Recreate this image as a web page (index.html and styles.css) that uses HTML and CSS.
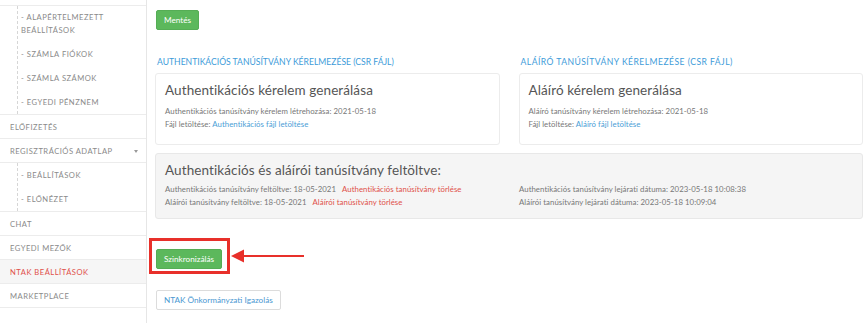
FILE: index.html
```html
<!DOCTYPE html>
<html lang="hu">
<head>
<meta charset="utf-8">
<title>NTAK beállítások</title>
<link rel="stylesheet" href="styles.css">
</head>
<body>
<div class="layout">
  <aside class="sidebar">
    <ul class="nav">
      <li class="nav-group">
        <ul class="sub">
          <li class="sub-item two-line">- ALAPÉRTELMEZETT BEÁLLÍTÁSOK</li>
          <li class="sub-item">- SZÁMLA FIÓKOK</li>
          <li class="sub-item">- SZÁMLA SZÁMOK</li>
          <li class="sub-item">- EGYEDI PÉNZNEM</li>
        </ul>
      </li>
      <li class="nav-item">ELŐFIZETÉS</li>
      <li class="nav-item has-caret">REGISZTRÁCIÓS ADATLAP <span class="caret"></span></li>
      <li class="nav-group">
        <ul class="sub">
          <li class="sub-item">- BEÁLLÍTÁSOK</li>
          <li class="sub-item">- ELŐNÉZET</li>
        </ul>
      </li>
      <li class="nav-item">CHAT</li>
      <li class="nav-item">EGYEDI MEZŐK</li>
      <li class="nav-item active">NTAK BEÁLLÍTÁSOK</li>
      <li class="nav-item">MARKETPLACE</li>
    </ul>
  </aside>
  <main class="main">
    <div class="row-save">
      <button class="btn btn-green">Mentés</button>
    </div>
    <div class="cols">
      <section class="col">
        <h3 class="sec-title">AUTHENTIKÁCIÓS TANÚSÍTVÁNY KÉRELMEZÉSE (CSR FÁJL)</h3>
        <div class="card">
          <h2 class="card-title">Authentikációs kérelem generálása</h2>
          <p class="line">Authentikációs tanúsítvány kérelem létrehozása: 2021-05-18</p>
          <p class="line">Fájl letöltése: <a class="link-blue">Authentikációs fájl letöltése</a></p>
        </div>
      </section>
      <section class="col">
        <h3 class="sec-title wide">ALÁÍRÓ TANÚSÍTVÁNY KÉRELMEZÉSE (CSR FÁJL)</h3>
        <div class="card">
          <h2 class="card-title">Aláíró kérelem generálása</h2>
          <p class="line">Aláíró tanúsítvány kérelem létrehozása: 2021-05-18</p>
          <p class="line">Fájl letöltése: <a class="link-blue">Aláíró fájl letöltése</a></p>
        </div>
      </section>
    </div>
    <div class="panel">
      <h2 class="card-title">Authentikációs és aláírói tanúsítvány feltöltve:</h2>
      <div class="panel-grid">
        <div>
          <p class="line">Authentikációs tanúsítvány feltöltve: 18-05-2021<a class="link-red">Authentikációs tanúsítvány törlése</a></p>
          <p class="line">Aláírói tanúsítvány feltöltve: 18-05-2021<a class="link-red">Aláírói tanúsítvány törlése</a></p>
        </div>
        <div>
          <p class="line">Authentikációs tanúsítvány lejárati dátuma: 2023-05-18 10:08:38</p>
          <p class="line">Aláírói tanúsítvány lejárati dátuma: 2023-05-18 10:09:04</p>
        </div>
      </div>
    </div>
    <div class="row-sync">
      <div class="highlight">
        <button class="btn btn-green">Szinkronizálás</button>
      </div>
      <svg class="arrow" width="74" height="14" viewBox="0 0 74 14">
        <path d="M12 7 H73" stroke="#e8302a" stroke-width="2.2" fill="none"/>
        <path d="M0 7 L13 0.5 L13 13.5 Z" fill="#e8302a"/>
      </svg>
    </div>
    <div class="row-ntak">
      <button class="btn btn-outline">NTAK Önkormányzati Igazolás</button>
    </div>
  </main>
</div>
</body>
</html>
```

FILE: styles.css
```css
* { box-sizing: border-box; }
html, body { margin: 0; padding: 0; background: #fff; }
body {
  font-family: Lato, "Open Sans", "Liberation Sans", sans-serif;
  color: #777;
  width: 864px;
  height: 323px;
  overflow: hidden;
}
.layout { display: flex; height: 323px; }

.sidebar {
  width: 147px;
  flex: none;
  border-right: 1px solid #e6e6e6;
  padding-top: 5px;
}
.nav, .sub { list-style: none; margin: 0; padding: 0; }
.nav { border-top: 1px solid #ececec; }
.nav > li { border-bottom: 1px solid #ececec; }
.nav-item {
  height: 24px;
  display: flex;
  align-items: center;
  padding-left: 10px;
  font-size: 7.6px;
  letter-spacing: 0.5px;
  color: #8a8a8a;
  position: relative;
}
.nav-item.active { background: #f6f6f6; color: #e0504a; }
.caret {
  position: absolute;
  right: 8px;
  top: 11px;
  width: 0; height: 0;
  border-left: 2.5px solid transparent;
  border-right: 2.5px solid transparent;
  border-top: 3px solid #999;
}
.sub {
  margin-left: 17px;
  border-left: 1px dashed #d6d6d6;
}
.sub-item {
  height: 24px;
  display: flex;
  align-items: center;
  padding-left: 3px;
  font-size: 7.6px;
  letter-spacing: 0.5px;
  color: #8a8a8a;
  line-height: 13px;
}
.sub-item.two-line { height: 36px; padding-right: 10px; }

.main {
  flex: 1;
  padding: 7px 1px 0 8px;
}
.btn {
  font-family: inherit;
  font-size: 8.2px;
  border-radius: 2px;
  cursor: pointer;
  height: 20px;
  padding: 0 7px;
  display: inline-flex;
  align-items: center;
}
.btn-green {
  background: #5cb85c;
  border: 1px solid #55ad55;
  color: #fff;
}
.btn-outline {
  background: #fff;
  border: 1px solid #dcdcdc;
  color: #4a98d2;
}
.row-save { padding-left: 1px; height: 20px; }

.cols {
  display: grid;
  grid-template-columns: 1fr 1fr;
  column-gap: 19px;
  margin-top: 30px;
}
.sec-title {
  margin: 0 0 5px 2px;
  font-size: 8.6px;
  font-weight: 400;
  color: #3d9bd9;
  height: 11px;
  line-height: 11px;
  white-space: nowrap;
}
.sec-title.wide { letter-spacing: 0.45px; }
.card {
  border: 1px solid #ececec;
  border-radius: 3px;
  height: 72px;
  padding: 9px 9px;
}
.card-title {
  margin: 0 0 7px 0;
  font-size: 13.5px;
  font-weight: 400;
  color: #555;
  line-height: 15px;
  letter-spacing: 0.1px;
}
.line {
  margin: 0;
  font-size: 7.8px;
  line-height: 13px;
  color: #777;
  white-space: nowrap;
  letter-spacing: 0.05px;
}
.link-blue { color: #4a9ed6; }
.link-red { color: #e0504a; margin-left: 6px; }

.panel {
  margin-top: 8px;
  background: #f5f5f5;
  border: 1px solid #e8e8e8;
  border-radius: 3px;
  height: 66px;
  padding: 9px 9px;
}
.panel .card-title { margin-bottom: 5px; }
.panel-grid {
  display: grid;
  grid-template-columns: 1fr 1fr;
  column-gap: 20px;
}

.row-sync {
  margin-top: 19px;
  display: flex;
  align-items: center;
}
.highlight {
  margin-left: -6px;
  border: 3px solid #e8302a;
  padding: 5px 5px 2px 4px;
}
.arrow { display: block; margin-left: 1px; }
.row-ntak { margin-top: 13px; padding-left: 1px; }
```
